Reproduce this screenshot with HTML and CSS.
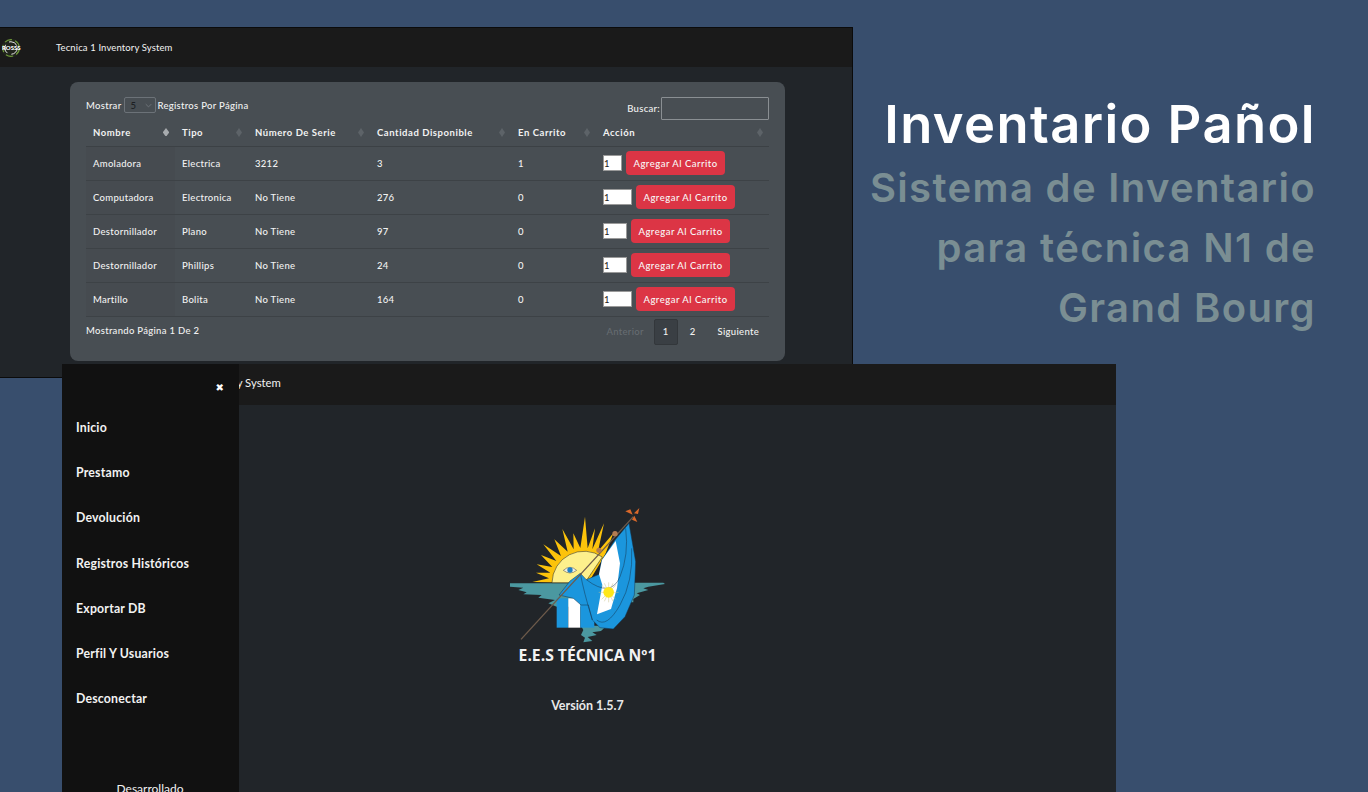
FILE: index.html
```html
<!DOCTYPE html>
<html lang="es">
<head>
    <meta charset="UTF-8">
    <meta name="viewport" content="width=device-width, initial-scale=1.0">
    <title>Inventario Pañol</title>
    <link rel="stylesheet" href="styles.css">
</head>
<body>
    <div class="stage">
        <!-- Inventory table window -->
        <section class="window window-table">
            <header class="navbar navbar-small">
                <svg class="brand" viewBox="0 0 24 24" aria-hidden="true">
                    <circle cx="12" cy="12" r="11.5" fill="#20241c"/>
                    <circle cx="12" cy="12" r="10" fill="none" stroke="#6f9a3a" stroke-width="1.4" stroke-dasharray="9 4"/>
                    <circle cx="12" cy="12" r="7.5" fill="none" stroke="#e8e8e8" stroke-width="1.2" stroke-dasharray="11 5"/>
                </svg>
                <span class="brand-text">ROSSS</span>
                <span class="navbar-title">Tecnica 1 Inventory System</span>
            </header>
            <div class="table-body">
                <div class="card">
                    <div class="table-tools">
                        <div class="length-control">
                            Mostrar
                            <span class="length-select">5 <svg viewBox="0 0 10 6" aria-hidden="true"><path d="M1 1l4 4 4-4" fill="none" stroke="#7b8186" stroke-width="1"/></svg></span>
                            Registros Por Página
                        </div>
                        <label class="search-control">Buscar: <input class="search-input" type="text"></label>
                    </div>
                    <table class="stock-table">
                        <colgroup>
                            <col class="col-name"><col class="col-type"><col class="col-serial">
                            <col class="col-qty"><col class="col-cart"><col class="col-action">
                        </colgroup>
                        <thead>
                            <tr>
                                <th class="sort-asc">Nombre</th>
                                <th>Tipo</th>
                                <th>Número De Serie</th>
                                <th>Cantidad Disponible</th>
                                <th>En Carrito</th>
                                <th>Acción</th>
                            </tr>
                        </thead>
                        <tbody>
                            <tr>
                                <td>Amoladora</td><td>Electrica</td><td>3212</td><td>3</td><td>1</td>
                                <td><div class="add-form"><input class="qty qty-s" value="1"><button class="add-btn">Agregar Al Carrito</button></div></td>
                            </tr>
                            <tr>
                                <td>Computadora</td><td>Electronica</td><td>No Tiene</td><td>276</td><td>0</td>
                                <td><div class="add-form"><input class="qty qty-l" value="1"><button class="add-btn">Agregar Al Carrito</button></div></td>
                            </tr>
                            <tr>
                                <td>Destornillador</td><td>Plano</td><td>No Tiene</td><td>97</td><td>0</td>
                                <td><div class="add-form"><input class="qty qty-m" value="1"><button class="add-btn">Agregar Al Carrito</button></div></td>
                            </tr>
                            <tr>
                                <td>Destornillador</td><td>Phillips</td><td>No Tiene</td><td>24</td><td>0</td>
                                <td><div class="add-form"><input class="qty qty-m" value="1"><button class="add-btn">Agregar Al Carrito</button></div></td>
                            </tr>
                            <tr>
                                <td>Martillo</td><td>Bolita</td><td>No Tiene</td><td>164</td><td>0</td>
                                <td><div class="add-form"><input class="qty qty-l" value="1"><button class="add-btn">Agregar Al Carrito</button></div></td>
                            </tr>
                        </tbody>
                    </table>
                    <div class="table-footer">
                        <span>Mostrando Página 1 De 2</span>
                        <nav class="pager">
                            <span class="page-link disabled">Anterior</span>
                            <span class="page-link active">1</span>
                            <span class="page-link">2</span>
                            <span class="page-link">Siguiente</span>
                        </nav>
                    </div>
                </div>
            </div>
        </section>

        <!-- Marketing text -->
        <div class="hero-text">
            <h1>Inventario Pañol</h1>
            <p>Sistema de Inventario<br>para técnica N1 de<br>Grand Bourg</p>
        </div>

        <!-- About window with open sidebar -->
        <section class="window window-about">
            <aside class="sidebar">
                <div class="sidebar-close">&#10006;</div>
                <nav class="sidebar-links">
                    <a>Inicio</a>
                    <a>Prestamo</a>
                    <a>Devolución</a>
                    <a>Registros Históricos</a>
                    <a>Exportar DB</a>
                    <a>Perfil Y Usuarios</a>
                    <a>Desconectar</a>
                </nav>
                <div class="sidebar-credit">Desarrollado</div>
            </aside>
            <header class="navbar navbar-large">
                <span class="navbar-title">Tecnica 1 Inventory System</span>
            </header>
            <div class="about-body">
                <svg class="school-logo" viewBox="0 0 495 420" aria-hidden="true">
                    <!-- water -->
                    <path fill="#4b98a0" d="M15 235H260V305H155L130 295 150 285 100 278 110 270 55 268 65 262 40 255 55 248 15 245z"/>
                    <path fill="#4b98a0" d="M350 233H475L480 237 430 245 415 250 430 255 395 265 405 270 385 282V292H350z"/>
                    <path fill="#4b98a0" d="M228 362H305L288 378 262 382 275 390 248 396 262 408 235 412 240 398 228 390 235 375z"/>
                    <!-- sun rays -->
                    <path fill="#fcc30b" d="M82 231 132 220 93 203 136 203 95 178 142 186 108 150 154 168 115 118 168 153 148 103 188 140 172 72 206 133 205 85 226 129 240 35 248 130 270 70 262 133 297 55 279 139 325 85 300 150 250 233z"/>
                    <!-- sun -->
                    <path fill="#fdf08c" stroke="#1b1b1b" stroke-width="1.5" d="M141 233A96 96 0 0 1 292 156L240 233z"/>
                    <!-- eye -->
                    <path fill="#f1f1e4" stroke="#444" stroke-width="1.5" d="M175 196Q195 178 215 196 195 212 175 196z"/>
                    <circle cx="195" cy="195" r="8" fill="#1f7fc4"/>
                    <!-- lower stripes -->
                    <path fill="#1b96dd" d="M155 280H190V368H155z"/>
                    <path fill="#fff" d="M190 280H226V368H190z"/>
                    <path fill="#1b96dd" d="M226 280H268V368H226z"/>
                    <!-- flag, upper -->
                    <path fill="#1b96dd" stroke="#14354f" stroke-width="1.5" d="M372 55 392 170 388 270 360 335 325 372 285 368 262 345 250 300 228 300 205 280 162 270 195 228 226 205 244 224 282 208 290 165 330 105z"/>
                    <path fill="#fff" d="M332 108 345 175 336 250 318 312 276 328 292 240 282 208 291 165z"/>
                    <path fill="none" stroke="#14354f" stroke-width="1.5" d="M362 70Q372 150 345 215T244 224M380 130Q385 230 345 300T275 345M226 205Q236 260 262 345"/>
                    <!-- flag sun -->
                    <path stroke="#c9c38a" stroke-width="1.5" d="M311 232V292M281 262H341M290 241 332 283M332 241 290 283M298 235 324 289M324 235 298 289"/>
                    <circle cx="311" cy="262" r="16" fill="#ffe71a"/>
                    <!-- pole -->
                    <path stroke="#6e5b4b" stroke-width="4" d="M48 403 385 35"/>
                    <circle cx="282" cy="136" r="8" fill="#b27c52"/>
                    <circle cx="330" cy="86" r="8" fill="#b27c52"/>
                    <!-- finial -->
                    <path fill="#d9682a" d="M383 29 361 19 376 13zM387 25 403 9 399 27zM388 32 397 51 381 44z"/>
                </svg>
                <div class="school-name">E.E.S TÉCNICA Nº1</div>
                <div class="version">Versión 1.5.7</div>
            </div>
        </section>
    </div>
</body>
</html>
```

FILE: styles.css
```css
html, body {
    margin: 0;
    height: 100%;
    overflow: hidden;
}

body {
    font-family: "Lato", "Open Sans", sans-serif;
    background-color: #384e6d;
    color: #f2f2f2;
}

.stage {
    position: relative;
    width: 1368px;
    height: 792px;
    overflow: hidden;
}

/* the two screenshots sit freely on the canvas */
.window {
    position: absolute;
    display: flex;
    flex-direction: column;
    background-color: #212529;
}

.window-table {
    left: -1px;
    top: 27px;
    width: 852px;
    height: 349px;
    border: 1px solid #0b0b0b;
    box-sizing: content-box;
    font-size: 9.5px;
}

.window-about {
    left: 62px;
    top: 364px;
    width: 1054px;
    height: 428px;
}

.navbar {
    display: flex;
    align-items: center;
    flex-shrink: 0;
    position: relative;
    background-color: #1a1a1a;
    color: #f2f2f2;
}

.navbar-small {
    height: 39px;
    padding-left: 1px;
}

.navbar-small .navbar-title {
    margin-left: 35px;
    font-size: 9.5px;
    letter-spacing: 0.12px;
}

.navbar-large {
    height: 41px;
}

.navbar-large .navbar-title {
    margin-left: 84px;
    padding-bottom: 5px;
    font-size: 11.3px;
    white-space: nowrap;
}

.brand {
    width: 20px;
    height: 20px;
}

.brand-text {
    position: absolute;
    left: 2px;
    top: 16px;
    font-size: 6px;
    font-weight: 900;
    color: #fff;
}

.table-body {
    flex: 1;
    padding: 15px 0 0 70px;
}

.card {
    width: 715px;
    height: 279px;
    box-sizing: border-box;
    padding: 0 16px;
    border-radius: 8px;
    background-color: #484e53;
    font-weight: 500;
    letter-spacing: 0.3px;
}

.table-tools {
    display: flex;
    justify-content: space-between;
    align-items: flex-end;
    height: 37px;
}

.length-control {
    display: flex;
    align-items: center;
    gap: 3px;
    padding-bottom: 6px;
}

.length-select {
    display: flex;
    align-items: center;
    justify-content: space-between;
    box-sizing: border-box;
    width: 32px;
    height: 16px;
    margin-right: -2px;
    padding: 0 3px 0 5px;
    border: 1px solid #6c7278;
    border-radius: 2px;
    color: #1c1f22;
}

.length-select svg {
    width: 7px;
    height: 5px;
}

.search-control {
    display: flex;
    align-items: center;
    gap: 1px;
    margin-bottom: -1px;
}

.search-input {
    box-sizing: border-box;
    width: 108px;
    height: 23px;
    padding: 0;
    border: 1px solid #8a8f93;
    border-radius: 1px;
    background-color: transparent;
}

.stock-table {
    width: 683px;
    table-layout: fixed;
    border-collapse: collapse;
}

.col-name { width: 89px; }
.col-type { width: 73px; }
.col-serial { width: 122px; }
.col-qty { width: 141px; }
.col-cart { width: 85px; }
.col-action { width: 173px; }

.stock-table th {
    position: relative;
    height: 27px;
    padding: 0 7px;
    box-sizing: border-box;
    text-align: left;
    font-weight: 700;
    letter-spacing: 0.55px;
    border-bottom: 1px solid #3c4145;
}

/* sort arrows */
.stock-table th::after {
    content: "";
    position: absolute;
    right: 6px;
    top: 9px;
    width: 6px;
    height: 9px;
    background-color: #5d6368;
    clip-path: polygon(50% 0, 100% 50%, 50% 100%, 0 50%);
}

.stock-table th.sort-asc::after {
    background-color: #a7abae;
    height: 8px;
    clip-path: polygon(50% 0, 100% 50%, 100% 60%, 60% 100%, 40% 100%, 0 60%, 0 50%);
}

.stock-table td {
    height: 34px;
    padding: 0 7px;
    box-sizing: border-box;
    border-bottom: 1px solid #3d4246;
}

.stock-table td:first-child {
    background-color: #464b50;
}

.add-form {
    display: flex;
    align-items: center;
    gap: 4px;
}

.qty {
    box-sizing: border-box;
    height: 16px;
    padding: 0;
    border: 1px solid #9a9a9a;
    background-color: #fff;
    color: #222;
    font-family: inherit;
    font-size: 9.5px;
}

.qty-s { width: 19px; }
.qty-m { width: 24px; }
.qty-l { width: 29px; }

.add-btn {
    width: 99px;
    height: 24px;
    padding: 0;
    border: none;
    border-radius: 4px;
    background-color: #dc3545;
    color: #f8f8f8;
    font-family: inherit;
    font-size: 9.5px;
    font-weight: 500;
    letter-spacing: 0.5px;
}

.table-footer {
    display: flex;
    justify-content: space-between;
    align-items: flex-start;
    padding-top: 2px;
}

.table-footer > span {
    padding-top: 6px;
}

.pager {
    display: flex;
    align-items: center;
    padding-right: 3px;
}

.page-link {
    padding: 6px 7px;
    line-height: 12px;
}

.page-link.disabled {
    color: #666c71;
    margin-right: 3px;
}

.page-link.active {
    width: 24px;
    box-sizing: border-box;
    text-align: center;
    border: 1px solid #33373b;
    border-radius: 2px;
    background-color: #3a3f44;
    margin-right: 5px;
}

.page-link:last-child {
    margin-left: 8px;
}

.hero-text {
    position: absolute;
    right: 52px;
    top: 93px;
    text-align: right;
    font-family: "Inter", "Open Sans", sans-serif;
}

.hero-text h1 {
    margin: 0;
    font-size: 52.5px;
    line-height: 62px;
    font-weight: 600;
    letter-spacing: 1.4px;
    color: #fff;
}

.hero-text p {
    margin: 3px 0 0;
    font-size: 40px;
    line-height: 60px;
    font-weight: 600;
    letter-spacing: 1.35px;
    color: #7a8e93;
}

.sidebar {
    position: absolute;
    left: 0;
    top: 0;
    bottom: 0;
    z-index: 2;
    width: 177px;
    background-color: #111;
}

.sidebar-close {
    position: absolute;
    right: 15px;
    top: 18px;
    font-family: "DejaVu Sans", sans-serif;
    font-size: 10px;
    color: #fff;
}

.sidebar-links {
    display: flex;
    flex-direction: column;
    padding: 53px 0 0 14px;
    font-size: 12.3px;
    font-weight: 700;
    letter-spacing: 0.2px;
}

.sidebar-links a {
    height: 45.2px;
    line-height: 22px;
}

.sidebar-credit {
    position: absolute;
    left: 0;
    right: 1px;
    top: 417px;
    text-align: center;
    font-size: 12px;
}

.about-body {
    flex: 1;
    display: flex;
    flex-direction: column;
    align-items: center;
    padding: 100px 3px 0 0;
}

.school-logo {
    width: 165px;
    height: 140px;
    flex-shrink: 0;
}

.school-name {
    font-family: "Open Sans", sans-serif;
    font-size: 15.7px;
    line-height: 20px;
    font-weight: 700;
    color: #f2f2f2;
}

.version {
    margin-top: 33px;
    font-size: 12.5px;
    font-weight: 700;
    color: #e8e8e8;
}
```
